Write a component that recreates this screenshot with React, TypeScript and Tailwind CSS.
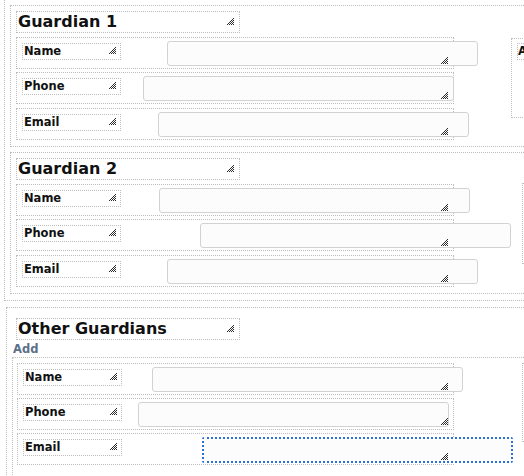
import React from "react";

// little hatched resize handle, drawn pixel by pixel
const gripCells: [number, number][] = [];
for (let y = 0; y < 7; y++) {
  for (let x = 0; x < 7; x++) {
    if (x + y >= 6 && (x + y) % 2 === 0) gripCells.push([x, y]);
  }
}

function Grip({ className }: { className: string }) {
  return (
    <svg
      className={className}
      width={7}
      height={7}
      viewBox="0 0 7 7"
      shapeRendering="crispEdges"
    >
      {gripCells.map(([x, y]) => (
        <rect key={`${x}-${y}`} x={x} y={y} width={1} height={1} fill="#2a2a2a" />
      ))}
    </svg>
  );
}

function Heading({ text, className = "" }: { text: string; className?: string }) {
  return (
    <div
      className={`relative h-[22px] w-[224px] border border-dotted border-[#bdbdbd] pl-[1px] text-[16px] font-bold leading-[20px] text-[#111] ${className}`}
    >
      {text}
      <Grip className="absolute right-[5px] top-[6px]" />
    </div>
  );
}

function FieldRow({
  label,
  gap,
  focused = false,
  className = "",
}: {
  label: string;
  gap: string;
  focused?: boolean;
  className?: string;
}) {
  return (
    <div
      className={`relative flex h-[32px] items-start border border-dotted border-[#bdbdbd] pl-[5px] pt-[3px] ${className}`}
    >
      <div className="relative mt-[2px] h-[17px] w-[99px] shrink-0 border border-dotted border-[#bdbdbd] pl-[1px] text-[11.5px] font-bold leading-[15px] text-[#111]">
        {label}
        <Grip className="absolute right-[4px] top-[3px]" />
      </div>
      <div
        className={
          focused
            ? `h-[26px] w-[311px] shrink-0 rounded-[2px] border-2 border-dotted border-[#2d6fd6] bg-[#fcfcfc] ${gap}`
            : `h-[25px] w-[311px] shrink-0 rounded-[3px] border border-[#d2d2d2] bg-[#fcfcfc] ${gap}`
        }
      />
      <Grip className="absolute right-[5px] top-[19px]" />
    </div>
  );
}

export default function App() {
  return (
    <div className="h-[476px] w-[524px] overflow-hidden bg-white pl-[4px] font-['DejaVu_Sans',sans-serif]">
      {/* outer box with the two fixed guardians */}
      <div className="-mt-px w-[600px] border border-dotted border-[#bdbdbd] pb-[6px] pl-[5px] pt-[5px]">
        <section className="w-[600px] border border-dotted border-[#bdbdbd] pb-[6px] pl-[5px] pt-[5px]">
          <Heading text="Guardian 1" />
          <div className="mt-[4px] flex items-start">
            <div className="w-[438px] shrink-0">
              <FieldRow label="Name" gap="ml-[46px]" />
              <FieldRow label="Phone" gap="ml-[22px]" className="mt-[3px]" />
              <FieldRow label="Email" gap="ml-[37px]" className="mt-[4px]" />
            </div>
            <div className="ml-[57px] mt-[1px] h-[80px] w-[100px] shrink-0 border border-dotted border-[#bdbdbd] pl-[5px] pt-[4px]">
              <div className="h-[17px] w-[99px] border border-dotted border-[#bdbdbd] text-[11.5px] font-bold leading-[15px] text-[#111]">
                Address
              </div>
            </div>
          </div>
        </section>

        <section className="mt-[5px] w-[600px] border border-dotted border-[#bdbdbd] pb-[6px] pl-[5px] pt-[5px]">
          <Heading text="Guardian 2" />
          <div className="mt-[4px] flex items-start">
            <div className="w-[438px] shrink-0">
              <FieldRow label="Name" gap="ml-[38px]" />
              <FieldRow label="Phone" gap="ml-[79px]" className="mt-[3px]" />
              <FieldRow label="Email" gap="ml-[46px]" className="mt-[4px]" />
            </div>
            <div className="-mt-px ml-[68px] h-[81px] w-[100px] shrink-0 border border-dotted border-[#bdbdbd]" />
          </div>
        </section>
      </div>

      {/* other guardians list */}
      <div className="ml-[2px] mt-[6px] h-[200px] w-[600px] border border-dotted border-[#bdbdbd] pl-[5px] pt-[10px]">
        <Heading text="Other Guardians" className="ml-[4px]" />
        <div className="ml-[1px] mt-[2px] text-[11.5px] font-bold leading-[15px] text-[#5b6f8a]">Add</div>
        <div className="h-[120px] w-[600px] border border-dotted border-[#bdbdbd] pl-[4px] pt-[5px]">
          <div className="flex items-start">
            <div className="w-[437px] shrink-0">
              <FieldRow label="Name" gap="ml-[30px]" />
              <FieldRow label="Phone" gap="ml-[16px]" className="mt-[3px]" />
              <FieldRow label="Email" gap="ml-[80px]" focused className="mt-[3px]" />
            </div>
            <div className="ml-[68px] h-[79px] w-[100px] shrink-0 border border-dotted border-[#bdbdbd]" />
          </div>
        </div>
      </div>
    </div>
  );
}
